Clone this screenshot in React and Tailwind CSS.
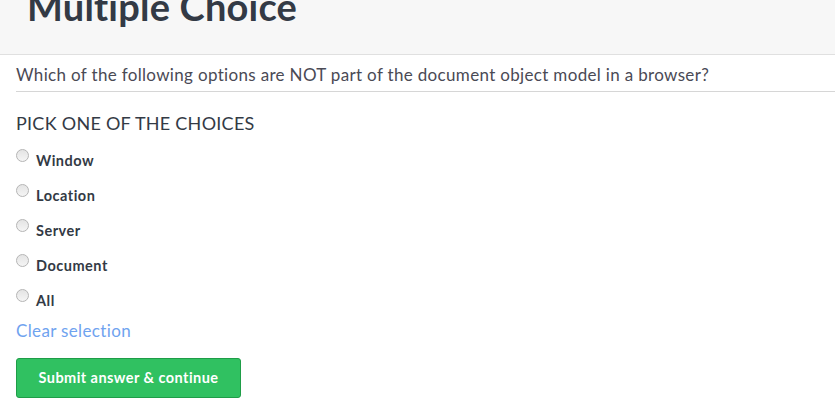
import React from 'react';

const choices = ['Window', 'Location', 'Server', 'Document', 'All'];

const App = () => {
  return (
    <div className="min-h-screen bg-white font-['Lato','Open_Sans',sans-serif] text-[#333]">
      {/* header strip, title scrolled mostly out of view */}
      <div className="h-[55px] overflow-hidden border-b border-[#e0e0e0] bg-[#f7f7f7] px-[27px]">
        <h1 className="-mt-[17px] text-[38px] font-bold leading-[46px] tracking-[0.2px] text-[#333a45]">Multiple Choice</h1>
      </div>

      <div className="pl-4">
        <p className="border-b border-[#d6d6d6] pt-[9px] pb-[5px] text-[17px] leading-[22px] tracking-[0.33px] text-[#4a4a55]">
          Which of the following options are NOT part of the document object model in a browser?
        </p>

        <h2 className="mt-[20px] text-[18px] leading-[22px] tracking-[0.26px] text-[#333a45]">PICK ONE OF THE CHOICES</h2>

        <div className="mt-[10px] flex flex-col">
          {choices.map((c) => (
            <label key={c} className="flex h-[35px] items-start pt-[6px]">
              <span className="mt-[-1px] h-[13px] w-[13px] rounded-full border border-[#b5b5b5] bg-gradient-to-b from-[#e4e4e4] to-[#f5f5f5]" />
              <span className="ml-[7px] mt-[2px] text-[14.5px] font-bold leading-[18px] tracking-[0.5px] text-[#333a45]">{c}</span>
            </label>
          ))}
        </div>

        <a className="mt-[1px] block text-[17px] leading-[22px] tracking-[0.35px] text-[#6fa3ef]">Clear selection</a>

        <button className="mt-[16px] flex h-[40px] w-[225px] items-center justify-center rounded-[3px] border border-[#1f9d48] bg-[#30c161] text-[14.5px] font-bold tracking-[0.45px] text-white">
          Submit answer &amp; continue
        </button>
      </div>
    </div>
  );
};

export default App;
